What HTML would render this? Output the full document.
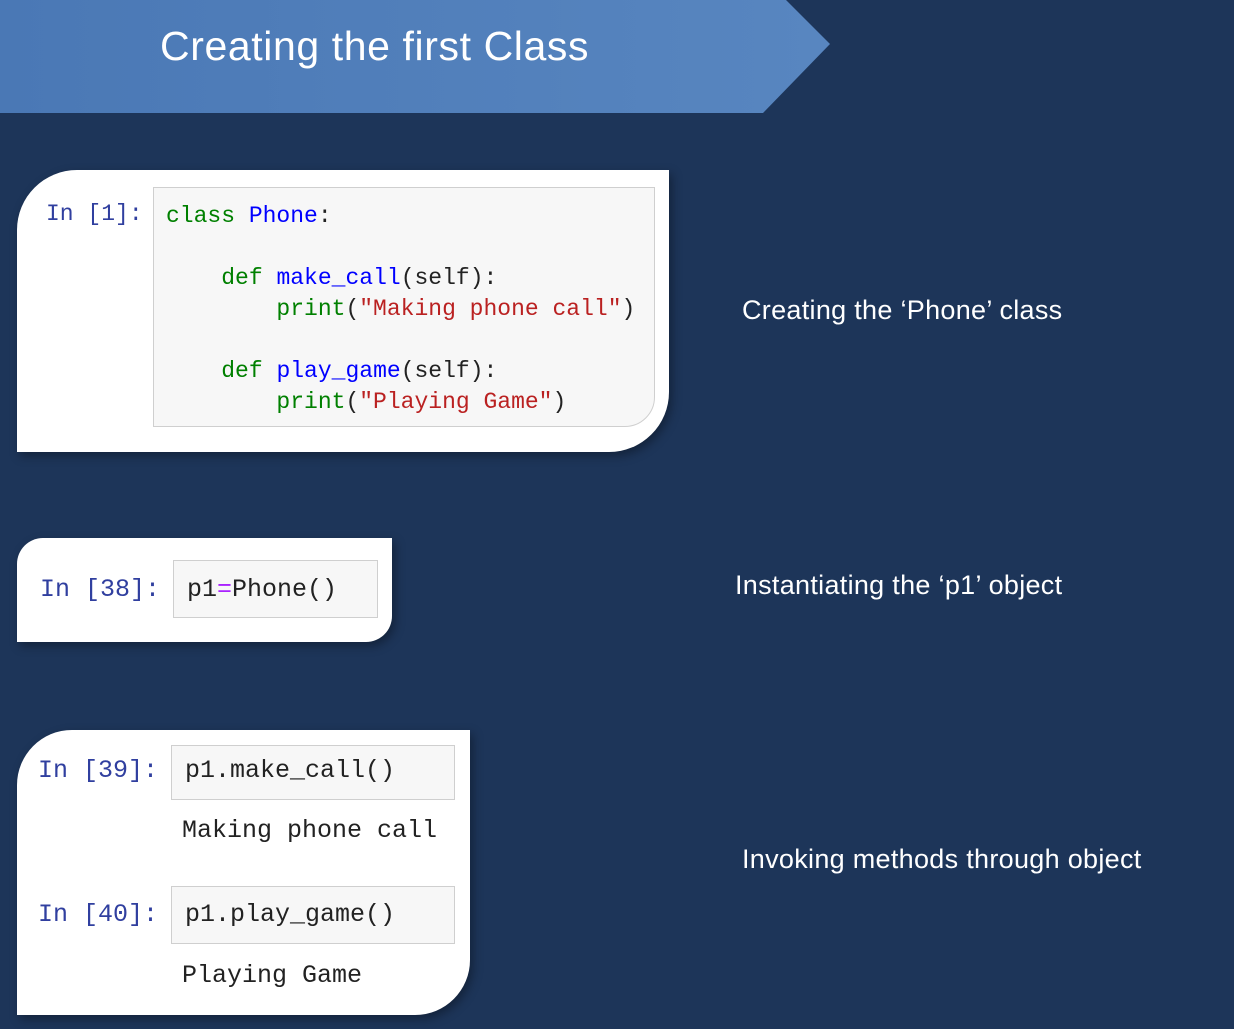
<!DOCTYPE html>
<html><head><meta charset="utf-8"><style>
*{margin:0;padding:0;box-sizing:border-box}
body{width:1234px;height:1029px;background:#1d3559;position:relative;overflow:hidden;font-family:"Liberation Sans",sans-serif}
.banner{position:absolute;left:0;top:0}
.title{position:absolute;left:160px;top:23px;color:#fff;font-size:41px;letter-spacing:0.6px}
.card{position:absolute;background:#fff;box-shadow:3px 4px 10px rgba(0,0,0,.35)}
.code{position:absolute;background:#f7f7f7;border:1px solid #cfcfcf;}
.mono{font-family:"Liberation Mono","DejaVu Sans Mono",monospace;white-space:pre;position:absolute;color:#222}
.p{color:#303f9f}.k{color:#008000}.n{color:#0000ff}.b{color:#008000}.s{color:#ba2121}.o{color:#aa22ff}
.lbl{position:absolute;color:#fff;font-size:27px;letter-spacing:0.3px}
</style></head><body>
<svg class="banner" width="840" height="120"><defs><linearGradient id="g" x1="0" x2="1"><stop offset="0" stop-color="#4a78b5"/><stop offset="1" stop-color="#5886c0"/></linearGradient></defs><polygon points="0,0 786,0 830,44 763,113 0,113" fill="url(#g)"/></svg>
<div class="title">Creating the first Class</div>

<div class="card" style="left:17px;top:170px;width:652px;height:282px;border-radius:60px 0 60px 0"></div>
<div class="code" style="left:153px;top:187px;width:502px;height:240px;border-bottom-right-radius:30px"></div>
<div class="mono p" style="left:46px;top:201px;font-size:23px">In [1]:</div>
<div class="mono" style="left:166px;top:201px;font-size:23px;line-height:31px"><span class="k">class</span> <span class="n">Phone</span>:

    <span class="k">def</span> <span class="n">make_call</span>(self):
        <span class="b">print</span>(<span class="s">"Making phone call"</span>)

    <span class="k">def</span> <span class="n">play_game</span>(self):
        <span class="b">print</span>(<span class="s">"Playing Game"</span>)</div>

<div class="card" style="left:17px;top:538px;width:375px;height:104px;border-radius:26px 0 26px 0"></div>
<div class="code" style="left:173px;top:560px;width:205px;height:58px"></div>
<div class="mono p" style="left:40px;top:575px;font-size:25px">In [38]:</div>
<div class="mono" style="left:187px;top:575px;font-size:25px">p1<span class="o">=</span>Phone()</div>

<div class="card" style="left:17px;top:730px;width:453px;height:285px;border-radius:55px 0 55px 0"></div>
<div class="code" style="left:171px;top:745px;width:284px;height:55px"></div>
<div class="code" style="left:171px;top:886px;width:284px;height:58px"></div>
<div class="mono p" style="left:38px;top:756px;font-size:25px">In [39]:</div>
<div class="mono" style="left:185px;top:756px;font-size:25px">p1.make_call()</div>
<div class="mono" style="left:182px;top:816px;font-size:25px">Making phone call</div>
<div class="mono p" style="left:38px;top:900px;font-size:25px">In [40]:</div>
<div class="mono" style="left:185px;top:900px;font-size:25px">p1.play_game()</div>
<div class="mono" style="left:182px;top:961px;font-size:25px">Playing Game</div>

<div class="lbl" style="left:742px;top:295px">Creating the ‘Phone’ class</div>
<div class="lbl" style="left:735px;top:570px">Instantiating the ‘p1’ object</div>
<div class="lbl" style="left:742px;top:844px">Invoking methods through object</div>
</body></html>
